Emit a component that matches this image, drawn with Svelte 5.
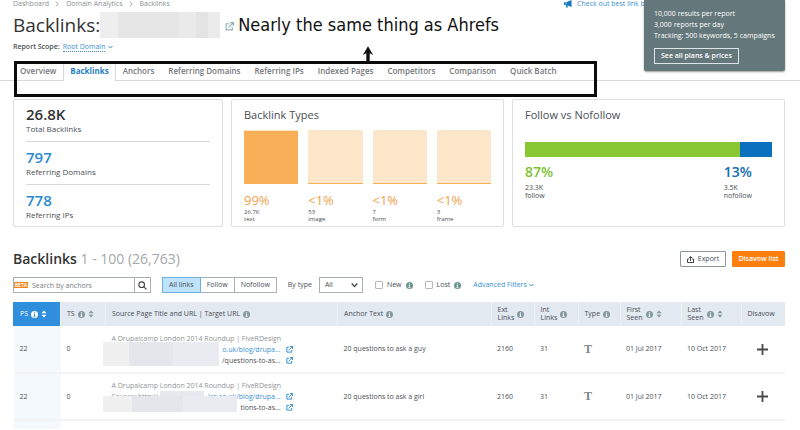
<script>
  const tabs = [
    "Overview",
    "Backlinks",
    "Anchors",
    "Referring Domains",
    "Referring IPs",
    "Indexed Pages",
    "Competitors",
    "Comparison",
    "Quick Batch",
  ];
  const totals = [
    { value: "26.8K", label: "Total Backlinks" },
    { value: "797", label: "Referring Domains", link: true },
    { value: "778", label: "Referring IPs", link: true },
  ];
  const types = [
    { share: "99%", fill: 99, count: "26.7K", name: "text" },
    { share: "<1%", fill: 2, count: "53", name: "image" },
    { share: "<1%", fill: 2, count: "7", name: "form" },
    { share: "<1%", fill: 2, count: "3", name: "frame" },
  ];
  const columns = [
    { lines: ["PS"], info: true, sort: true, width: 47, cls: "ps" },
    { lines: ["TS"], info: true, sort: true, width: 45 },
    { lines: ["Source Page Title and URL | Target URL"], info: true, width: 232 },
    { lines: ["Anchor Text"], info: true },
    { lines: ["Ext", "Links"], info: true, width: 43 },
    { lines: ["Int", "Links"], info: true, width: 44 },
    { lines: ["Type"], info: true, width: 42 },
    { lines: ["First", "Seen"], info: true, sort: true, width: 61 },
    { lines: ["Last", "Seen"], info: true, sort: true, width: 60 },
    { lines: ["Disavow"], width: 44 },
  ];
  const rows = [
    { anchor: "20 questions to ask a guy", lead: "", source: "o.uk/blog/drupa...", target: "/questions-to-as...", mask: "first" },
    { anchor: "20 questions to ask a girl", lead: "Source: http://", source: "les.co.uk/blog/drupa...", target: "tions-to-as...", mask: "second" },
  ];
  const title = "A Drupalcamp London 2014 Roundup | FiveRDesign";

  let linkFilter = $state("All links");
  let type = $state("All");
  let search = $state("");
  let onlyNew = $state(false);
  let onlyLost = $state(false);
</script>

{#snippet info()}
  <svg class="info" viewBox="0 0 16 16" aria-hidden="true">
    <circle cx="8" cy="8" r="8" fill="currentColor" />
    <path class="mark" d="M6 6.5h3v5h1.5V13h-5v-1.5H7V8H6zM7 2.8h2.2V5H7z" />
  </svg>
{/snippet}

{#snippet sort()}
  <svg class="sort" viewBox="0 0 12 16" aria-hidden="true">
    <path d="M6 1l5 5.5H1zM6 15l5-5.5H1z" fill="currentColor" />
  </svg>
{/snippet}

{#snippet chevron()}
  <svg class="chevron" viewBox="0 0 10 8" aria-hidden="true">
    <path d="M1 2l4 4 4-4" fill="none" stroke="currentColor" stroke-width="2" />
  </svg>
{/snippet}

{#snippet external()}
  <svg class="external" viewBox="0 0 16 16" aria-hidden="true">
    <path d="M7 3H2v11h11V9" fill="none" stroke="currentColor" stroke-width="2" />
    <path d="M9 1h6v6M15 1L6 10" fill="none" stroke="currentColor" stroke-width="2" />
  </svg>
{/snippet}

<div class="page">
  <aside class="plan">
    <p>10,000 results per report</p>
    <p>3,000 reports per day</p>
    <p>Tracking: 500 keywords, 5 campaigns</p>
    <button type="button">See all plans &amp; prices</button>
  </aside>

  <header>
    <div class="top">
      <nav class="crumbs" aria-label="Breadcrumb">
        <a href="#dashboard">Dashboard</a>
        <svg viewBox="0 0 6 8"><path d="M1 1l3 3-3 3" /></svg>
        <a href="#analytics">Domain Analytics</a>
        <svg viewBox="0 0 6 8"><path d="M1 1l3 3-3 3" /></svg>
        <a href="#backlinks">Backlinks</a>
      </nav>
      <a class="promo" href="#best">
        <svg viewBox="0 0 20 18" aria-hidden="true">
          <path d="M1 5h4v6H1zM6 5l12-5v16L6 11zM5 11h3l2 6H6z" fill="currentColor" />
        </svg>
        Check out best link b
      </a>
    </div>
    <div class="heading">
      <h1>Backlinks:</h1>
      <span class="domain"></span>
      <a class="open" href="#domain" aria-label="Open domain">{@render external()}</a>
      <span class="note">Nearly the same thing as Ahrefs</span>
    </div>
    <div class="scope">
      Report Scope: <a href="#scope">Root Domain</a>{@render chevron()}
    </div>
  </header>

  <nav class="tabs">
    <ul>
      {#each tabs as tab}
        <li class:active={tab === "Backlinks"}><a href="#tab">{tab}</a></li>
      {/each}
      <li class="frame" aria-hidden="true">
        <svg viewBox="0 0 14 19">
          <path d="M5 19V8L1 10 7 0l6 10-4-2v11z" />
        </svg>
      </li>
    </ul>
  </nav>

  <main>
    <div class="cards">
      <section class="card totals">
        {#each totals as item}
          <div class="total">
            <strong class:link={item.link}>{item.value}</strong>
            <span>{item.label}</span>
          </div>
        {/each}
      </section>
      <section class="card">
        <h2>Backlink Types</h2>
        <div class="types">
          {#each types as item}
            <div class="type">
              <div class="square"><div style="height: {item.fill}%"></div></div>
              <strong>{item.share}</strong>
              <small>{item.count}</small>
              <small>{item.name}</small>
            </div>
          {/each}
        </div>
      </section>
      <section class="card follow">
        <h2>Follow vs Nofollow</h2>
        <div class="bar"><div style="width: 87%"></div></div>
        <div class="legend">
          <div class="yes"><strong>87%</strong><span>23.3K</span><span>follow</span></div>
          <div class="no"><strong>13%</strong><span>3.5K</span><span>nofollow</span></div>
        </div>
      </section>
    </div>

    <div class="list-head">
      <h2>Backlinks <span>1 - 100 (26,763)</span></h2>
      <button type="button" class="export">
        <svg viewBox="0 0 14 14" aria-hidden="true">
          <path d="M4 6H1v7h12V6h-3M7 10V2M4 4l3-3 3 3" />
        </svg>
        Export
      </button>
      <button type="button" class="disavow">Disavow list</button>
    </div>

    <div class="filters">
      <form class="search" onsubmit={(e) => e.preventDefault()}>
        <span class="beta">BETA</span>
        <input type="text" aria-label="Search by anchors" placeholder="Search by anchors" bind:value={search} />
        <button aria-label="Search">
          <svg viewBox="0 0 16 16">
            <circle cx="6.5" cy="6.5" r="5" />
            <path d="M10 10l5 5" />
          </svg>
        </button>
      </form>
      <div class="group">
        {#each ["All links", "Follow", "Nofollow"] as name}
          <button type="button" class:on={linkFilter === name} onclick={() => (linkFilter = name)}>{name}</button>
        {/each}
      </div>
      <label for="by-type">By type</label>
      <div class="select">
        <select id="by-type" bind:value={type}>
          <option>All</option>
          <option>Text</option>
          <option>Image</option>
        </select>
        {@render chevron()}
      </div>
      <label class="check"><input type="checkbox" bind:checked={onlyNew} />New {@render info()}</label>
      <label class="check"><input type="checkbox" bind:checked={onlyLost} />Lost {@render info()}</label>
      <a class="advanced" href="#filters">Advanced Filters {@render chevron()}</a>
    </div>

    <table>
      <colgroup>
        {#each columns as col}
          <col style={col.width ? `width: ${col.width}px` : ""} />
        {/each}
      </colgroup>
      <thead>
        <tr>
          {#each columns as col}
            <th class={col.cls}>
              <div class="th">
                <span>{#each col.lines as line}<span class="line">{line}</span>{/each}</span>
                {#if col.info}{@render info()}{/if}
                {#if col.sort}{@render sort()}{/if}
              </div>
            </th>
          {/each}
        </tr>
      </thead>
      <tbody>
        {#each rows as row}
          <tr>
            <td class="ps">22</td>
            <td>0</td>
            <td>
              <div class="source">
                <p class="title">{title}</p>
                <p class="url"><span>{row.lead}</span><a href="#source">{row.source}</a>{@render external()}</p>
                <p class="url"><span></span>{row.target}{@render external()}</p>
                <div class="mask {row.mask}"></div>
              </div>
            </td>
            <td>{row.anchor}</td>
            <td>2160</td>
            <td>31</td>
            <td class="kind">T</td>
            <td>01 Jul 2017</td>
            <td>10 Oct 2017</td>
            <td class="add">
              <button type="button" aria-label="Disavow">
                <svg viewBox="0 0 12 12"><path d="M6 0v12M0 6h12" /></svg>
              </button>
            </td>
          </tr>
        {/each}
        <tr class="rest"><td class="ps"></td><td colspan="9"></td></tr>
      </tbody>
    </table>
  </main>
</div>

<style>
  :global(body) {
    background: #fff;
  }

  .page {
    position: relative;
    color: #4a4f54;
    font: 8px/10px "Open Sans", "Noto Sans", sans-serif;
  }

  h1,
  h2,
  p,
  ul {
    margin: 0;
    padding: 0;
    font-weight: 400;
  }

  a {
    color: #3a8fd0;
    text-decoration: none;
  }

  svg {
    flex: none;
  }

  button,
  input,
  select {
    box-sizing: border-box;
    margin: 0;
    font: inherit;
    color: inherit;
  }

  button {
    cursor: pointer;
  }

  .info {
    width: 7px;
    height: 7px;
    color: #84989f;
  }

  .mark {
    fill: #fff;
  }

  .sort {
    width: 6px;
    height: 8px;
    color: #84989f;
  }

  .chevron {
    width: 5px;
    height: 4px;
  }

  .external {
    width: 7px;
    height: 7px;
    color: #2183c4;
  }

  .plan {
    position: absolute;
    z-index: 2;
    top: 0;
    right: 15px;
    box-sizing: border-box;
    width: 141px;
    padding: 8px 10px 7px;
    border-radius: 0 0 2px 2px;
    background: #64777b;
    box-shadow: 0 1px 2px #0006;
    color: #fff;
    font-size: 7px;
    font-weight: 600;
    line-height: 11px;
  }

  .plan button {
    height: 16px;
    margin-top: 7px;
    padding: 0 6px;
    border: 1px solid #dfe5e6;
    background: none;
    line-height: 12px;
  }

  header {
    padding: 0 13px;
  }

  .top {
    display: flex;
    height: 8px;
    line-height: 8px;
  }

  .crumbs {
    display: flex;
    gap: 6px;
    width: 550px;
    font-size: 7px;
  }

  .crumbs a {
    color: #8b9095;
  }

  .crumbs svg {
    width: 5px;
    height: 8px;
    fill: none;
    stroke: #8b9095;
  }

  .promo {
    display: flex;
    gap: 4px;
    font-size: 7px;
    white-space: nowrap;
  }

  .promo svg {
    width: 10px;
    height: 8px;
    color: #1479c0;
  }

  .heading {
    display: flex;
    align-items: center;
    height: 32px;
    padding-top: 2px;
    box-sizing: border-box;
  }

  h1 {
    color: #333;
    font-size: 19px;
    line-height: 30px;
  }

  .domain {
    width: 120px;
    height: 26px;
    background: linear-gradient(90deg, #eee 15%, #e6e6e6 15% 65%, #eaeaea 65% 80%, #e4e4e4 80% 90%, #ebebeb 90%);
  }

  .open {
    display: flex;
    margin: 3px 4px 0 5px;
  }

  .open .external {
    width: 9px;
    height: 9px;
    color: #8fb2ae;
  }

  .note {
    color: #111;
    font: 18px/30px "DejaVu Sans Condensed", "DejaVu Sans", sans-serif;
    font-stretch: condensed;
    white-space: nowrap;
  }

  .scope {
    display: flex;
    align-items: center;
    gap: 3px;
    padding: 2px 0;
    font-size: 7px;
    font-weight: 600;
  }

  .scope a {
    border-bottom: 1px dotted #3a8fd0;
    font-weight: 400;
    line-height: 9px;
  }

  .scope .chevron {
    color: #3a8fd0;
  }

  .tabs {
    margin-top: 7px;
    padding-left: 13px;
    border-bottom: 1px solid #d6d9db;
  }

  ul {
    position: relative;
    display: flex;
    width: max-content;
    list-style: none;
    font-size: 8px;
    font-weight: 600;
    line-height: 19px;
  }

  .tabs a {
    display: block;
    padding: 0 7px;
    color: #74787c;
  }

  .tabs .active {
    margin-bottom: -1px;
    border: 1px solid #d6d9db;
    border-width: 0 1px;
    background: #fff;
  }

  .tabs .active a {
    padding: 0 6px 1px;
    color: #1f7fc1;
    font-weight: 700;
  }

  .frame {
    position: absolute;
    top: 0;
    left: 1px;
    right: -34px;
    height: 30px;
    border: 3px solid #0b0b0b;
    pointer-events: none;
  }

  .frame svg {
    position: absolute;
    left: 345px;
    bottom: 100%;
    width: 12px;
    height: 19px;
    fill: #111;
  }

  main {
    padding: 18px 15px 0 13px;
  }

  .cards {
    display: grid;
    grid-template-columns: 10fr 13fr 13fr;
    gap: 8px;
  }

  .card {
    box-sizing: border-box;
    height: 128px;
    padding: 7px 12px;
    border: 1px solid #dcdfe1;
    border-radius: 2px;
  }

  .card h2 {
    font-size: 11px;
    line-height: 16px;
  }

  strong,
  small,
  .total span,
  .legend span {
    display: block;
  }

  .totals {
    padding-top: 0;
  }

  .total {
    box-sizing: border-box;
    height: 43px;
    padding-top: 5px;
  }

  .total + .total {
    border-top: 1px solid #d5d8da;
  }

  .total:first-child {
    height: 41px;
    padding-top: 4px;
  }

  .total strong {
    color: #333;
    font-size: 15px;
    font-weight: 600;
    line-height: 20px;
  }

  .total span {
    line-height: 9px;
  }

  .total .link {
    color: #2d8ad0;
  }

  .types {
    display: grid;
    grid-template-columns: repeat(4, 1fr);
    gap: 10px;
    margin-top: 7px;
  }

  .square {
    display: flex;
    align-items: flex-end;
    height: 54px;
    margin-bottom: 8px;
    background: #fce7cb;
  }

  .square div {
    width: 100%;
    background: #f7af58;
  }

  .type strong {
    color: #f0a14d;
    font-size: 13px;
    font-weight: 400;
    line-height: 17px;
  }

  .type small {
    font-size: 6px;
    line-height: 7px;
  }

  .bar {
    height: 15px;
    margin-top: 19px;
    background: #0b70bd;
  }

  .bar div {
    height: 100%;
    background: #8ac833;
  }

  .legend {
    display: flex;
    justify-content: space-between;
    margin-top: 6px;
    padding-right: 20px;
    font-size: 7px;
    line-height: 8px;
  }

  .legend strong {
    margin-bottom: 3px;
    font-size: 14px;
    font-weight: 600;
    line-height: 18px;
  }

  .yes strong {
    color: #82c131;
  }

  .no strong {
    color: #0f6cb4;
  }

  .list-head {
    display: flex;
    align-items: center;
    gap: 6px;
    margin-top: 22px;
    height: 20px;
  }

  .list-head h2 {
    flex: 1;
    color: #333;
    font-size: 14px;
    font-weight: 600;
    line-height: 20px;
  }

  .list-head h2 span {
    color: #a4a8ab;
    font-weight: 400;
  }

  .list-head button {
    display: flex;
    align-items: center;
    justify-content: center;
    gap: 4px;
    height: 16px;
    padding: 0 4px;
    border: 1px solid #8d9599;
    border-radius: 1px;
    background: #fff;
    font-size: 7px;
  }

  .list-head .export {
    width: 46px;
  }

  .export svg {
    width: 7px;
    height: 7px;
    fill: none;
    stroke: #444;
    stroke-width: 2;
  }

  .list-head .disavow {
    width: 53px;
    border-color: #ff7f0e;
    background: #ff7f0e;
    color: #fff;
    font-weight: 600;
    white-space: nowrap;
  }

  .filters {
    display: flex;
    align-items: center;
    height: 16px;
    margin-top: 8px;
    font-size: 7px;
    white-space: nowrap;
  }

  .search {
    display: flex;
    align-items: center;
    box-sizing: border-box;
    width: 138px;
    height: 16px;
    border: 1px solid #a9aeb1;
  }

  .beta {
    width: 14px;
    background: #f5861f;
    color: #fff;
    font-size: 5px;
    font-weight: 700;
    line-height: 6px;
    text-align: center;
  }

  .search input {
    flex: 1;
    min-width: 0;
    height: 14px;
    padding: 0 4px;
    border: 0;
    outline: 0;
    background: none;
  }

  .search input::placeholder {
    color: #777c80;
  }

  .search button {
    display: flex;
    align-items: center;
    justify-content: center;
    width: 16px;
    height: 14px;
    padding: 0;
    border: 0;
    border-left: 1px solid #a9aeb1;
    background: none;
  }

  .search svg {
    width: 9px;
    height: 9px;
    fill: none;
    stroke: #444;
    stroke-width: 2;
  }

  .group {
    display: flex;
    margin: 0 11px;
  }

  .group button {
    height: 16px;
    padding: 0 6px;
    border: 1px solid #a9aeb1;
    border-left-width: 0;
    background: #fff;
  }

  .group button:first-child {
    border-left-width: 1px;
  }

  .group .on {
    border-color: #6fb0dc;
    background: #bfe3fa;
  }

  .select {
    position: relative;
    margin: 0 12px 0 7px;
  }

  .select select {
    width: 44px;
    height: 16px;
    padding: 0 5px;
    border: 1px solid #a9aeb1;
    border-radius: 0;
    background: #fff;
    appearance: none;
  }

  .select .chevron {
    position: absolute;
    top: 5px;
    right: 5px;
    width: 7px;
    height: 6px;
    pointer-events: none;
  }

  .check {
    display: flex;
    align-items: center;
    gap: 4px;
    margin-right: 12px;
  }

  .check input {
    width: 8px;
    height: 8px;
    border: 1px solid #b4b9bc;
    border-radius: 1px;
    appearance: none;
  }

  .check input:checked {
    background: #2d8ad0;
  }

  .check .info {
    color: #6c958f;
  }

  table {
    width: 100%;
    margin-top: 9px;
    border-collapse: collapse;
    table-layout: fixed;
    font-size: 7px;
    line-height: 10px;
  }

  th {
    height: 24px;
    padding: 0 0 0 6px;
    border-left: 1px solid #eef3f7;
    background: #e2e9f1;
    font-weight: 400;
    text-align: left;
  }

  .th {
    display: flex;
    align-items: center;
    gap: 3px;
    white-space: nowrap;
  }

  .line {
    display: block;
    line-height: 8px;
  }

  th.ps {
    border-color: #2f8fdc;
    background: #2f8fdc;
    color: #fff;
  }

  th.ps svg {
    color: #fff;
  }

  th.ps .mark {
    fill: #2f8fdc;
  }

  td {
    box-sizing: border-box;
    height: 47px;
    padding: 0 0 0 6px;
    border-bottom: 2px solid #f2f3f4;
    white-space: nowrap;
  }

  td.ps {
    background: #f4f9fe;
  }

  .rest td {
    height: 9px;
    border-bottom: 0;
  }

  .source {
    position: relative;
    width: 181px;
    line-height: 11px;
  }

  .title {
    color: #8f9498;
  }

  .url {
    display: flex;
    align-items: center;
  }

  .url span {
    flex: 1;
    color: #8f9498;
  }

  .url .external {
    margin-left: 5px;
  }

  .mask {
    position: absolute;
    left: -9px;
    background: linear-gradient(90deg, #f0f0f1 22%, #e4e6eb 22% 60%, #e9ebf0 60%);
  }

  .first {
    top: 9px;
    width: 116px;
    height: 24px;
  }

  .second {
    top: 16px;
    width: 134px;
    height: 16px;
  }

  .second::before {
    content: "";
    position: absolute;
    top: -5px;
    left: 57px;
    width: 44px;
    height: 5px;
    background: #e7e9ef;
  }

  td.kind {
    color: #7b858b;
    font: 700 12px "Liberation Serif", serif;
  }

  .add button {
    display: flex;
    margin-left: 10px;
    padding: 0;
    border: 0;
    background: none;
  }

  .add svg {
    width: 11px;
    height: 11px;
    stroke: #4a4a4a;
    stroke-width: 2;
  }
</style>
